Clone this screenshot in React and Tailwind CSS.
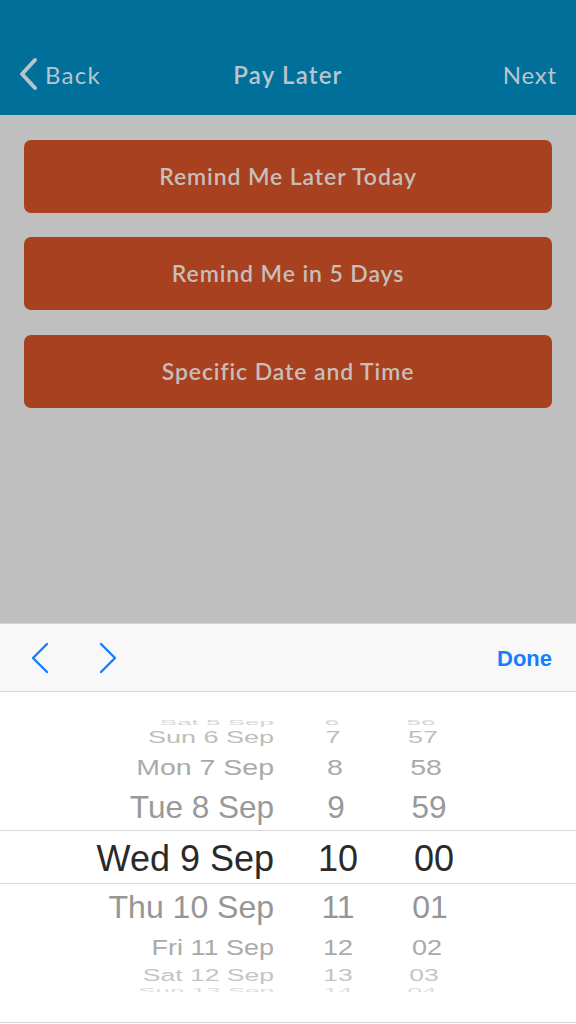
import React from "react";

// wheel rows above and below the selection band, squashed like the iOS drum
const rowsAbove = [
  { d: "Sat 5 Sep", h: "6", m: "56", row: "h-[8px]", text: "text-[26px] scale-y-[0.3] text-[#d4d4d4]", hc: "ml-[26px]", mc: "ml-[26px]" },
  { d: "Sun 6 Sep", h: "7", m: "57", row: "h-[23px]", text: "text-[27px] scale-y-[0.6] text-[#bdbdbd]", hc: "ml-[27px]", mc: "ml-[27px]" },
  { d: "Mon 7 Sep", h: "8", m: "58", row: "h-[36px]", text: "text-[28.5px] scale-y-[0.78] text-[#aaaaaa]", hc: "ml-[29px]", mc: "ml-[28px]" },
  { d: "Tue 8 Sep", h: "9", m: "59", row: "h-[45px]", text: "text-[31.5px] text-[#999999]", hc: "ml-[30px]", mc: "ml-[30px]" },
];

const rowsBelow = [
  { d: "Thu 10 Sep", h: "11", m: "01", row: "h-[45px]", text: "text-[32px] scale-y-[0.96] text-[#969696]", hc: "ml-[32px]", mc: "ml-[29px]" },
  { d: "Fri 11 Sep", h: "12", m: "02", row: "h-[36px]", text: "text-[27px] scale-y-[0.83] text-[#aaaaaa]", hc: "ml-[32px]", mc: "ml-[26px]" },
  { d: "Sat 12 Sep", h: "13", m: "03", row: "h-[20px]", text: "text-[26.5px] scale-y-[0.63] text-[#c4c4c4]", hc: "ml-[32px]", mc: "ml-[23px]" },
  { d: "Sun 13 Sep", h: "14", m: "04", row: "h-[12px]", text: "text-[26px] scale-y-[0.35] text-[#dcdcdc]", hc: "ml-[32px]", mc: "ml-[21px]" },
];

const PickerRow = ({ r }) => (
  <div className={`flex items-center ${r.row}`}>
    <div className={`flex w-full items-center leading-none ${r.text}`}>
      <span className="w-[274px] text-right whitespace-nowrap">{r.d}</span>
      <span className={`w-[64px] text-center ${r.hc}`}>{r.h}</span>
      <span className={`w-[62px] text-center ${r.mc}`}>{r.m}</span>
    </div>
  </div>
);

const ReminderButton = ({ label, className = "" }) => (
  <button
    className={`h-[73px] w-full rounded-[7px] bg-[#a8411f] text-[23px] font-semibold tracking-[0.9px] text-[#c7beba] ${className}`}
  >
    {label}
  </button>
);

export default function App() {
  return (
    <div className="flex h-[1024px] w-[576px] flex-col overflow-hidden bg-white font-['Lato',sans-serif]">
      {/* Nav bar */}
      <div className="h-[115px] shrink-0 bg-[#00709b] pt-[40px]">
        <div className="grid h-[70px] grid-cols-3 items-center text-[#bac5cb]">
          <div className="flex items-center pl-[18px]">
            <svg width="21" height="34" viewBox="0 0 21 34" className="mt-[-2px]">
              <polyline
                points="17,3 4,17 17,31"
                fill="none"
                stroke="#b9c4ca"
                strokeWidth="4"
                strokeLinecap="round"
                strokeLinejoin="round"
              />
            </svg>
            <span className="ml-[6px] text-[24px] tracking-[1.3px]">Back</span>
          </div>
          <div className="text-center text-[24px] font-semibold tracking-[1.2px] whitespace-nowrap">Pay Later</div>
          <div className="pr-[19px] text-right text-[24px] tracking-[0.8px]">Next</div>
        </div>
      </div>

      {/* Dimmed content */}
      <div className="flex h-[508px] shrink-0 flex-col bg-[#bfbfbf] px-[24px] pt-[25px]">
        <ReminderButton label="Remind Me Later Today" />
        <ReminderButton label="Remind Me in 5 Days" className="mt-[24px]" />
        <ReminderButton label="Specific Date and Time" className="mt-[25px]" />
      </div>

      {/* Toolbar */}
      <div className="flex h-[69px] shrink-0 items-center border-y border-[#d6d6d6] bg-[#f8f8f8]">
        <div className="flex items-center gap-[48px] pl-[30px]">
          <svg width="20" height="32" viewBox="0 0 20 32">
            <polyline
              points="17,2 3,16 17,30"
              fill="none"
              stroke="#157efb"
              strokeWidth="2.4"
              strokeLinecap="round"
              strokeLinejoin="round"
            />
          </svg>
          <svg width="20" height="32" viewBox="0 0 20 32">
            <polyline
              points="3,2 17,16 3,30"
              fill="none"
              stroke="#157efb"
              strokeWidth="2.4"
              strokeLinecap="round"
              strokeLinejoin="round"
            />
          </svg>
        </div>
        <span className="ml-auto pr-[24px] pt-[2px] font-['Liberation_Sans',sans-serif] text-[22px] font-semibold text-[#157efb]">
          Done
        </span>
      </div>

      {/* Picker */}
      <div className="h-[331px] shrink-0 border-b border-[#d6d6d6] bg-white pt-[26px] font-['Liberation_Sans',sans-serif]">
        <div className="h-[274px] overflow-hidden">
          {rowsAbove.map((r) => (
            <PickerRow key={r.d} r={r} />
          ))}
          <div className="flex h-[54px] items-center border-y border-[#d8d8d8] pt-[3px]">
            <div className="flex w-full items-center text-[36px] leading-none text-[#2a2a2a]">
              <span className="w-[274px] text-right whitespace-nowrap">Wed 9 Sep</span>
              <span className="ml-[32px] w-[64px] text-center">10</span>
              <span className="ml-[30px] w-[62px] pl-[6px] text-center">00</span>
            </div>
          </div>
          {rowsBelow.map((r) => (
            <PickerRow key={r.d} r={r} />
          ))}
        </div>
      </div>
    </div>
  );
}
